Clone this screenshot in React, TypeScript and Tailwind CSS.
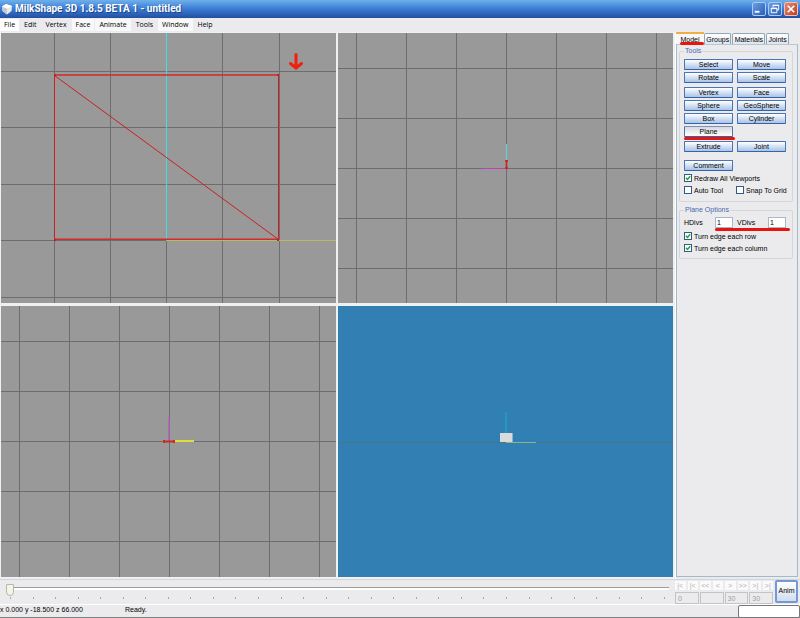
import type { ReactNode } from "react";

const menus = [
  { name: "File", style: "bg-white px-1" },
  { name: "Edit", style: "px-1" },
  { name: "Vertex", style: "px-1" },
  { name: "Face", style: "bg-[#f8f8f8] px-1" },
  { name: "Animate", style: "bg-[#f8f8f8] px-1" },
  { name: "Tools", style: "px-1" },
  { name: "Window", style: "bg-[#f8f8f8] px-1" },
  { name: "Help", style: "px-1" },
];

const tabs = ["Groups", "Materials", "Joints"];
const transport = ["|<", "|<", "<<", "<", ">", ">>", ">|", ">|"];
const ticks = Array.from({ length: 30 }, (_, i) => i);

function TitleBar() {
  return (
    <header className="flex h-[18px] shrink-0 items-center bg-linear-to-b from-[#6fb0ea] via-[#3a7bd5] to-[#234f9f] pr-0.5 pl-px">
      <svg className="size-3 shrink-0" viewBox="0 0 12 12" aria-hidden="true">
        <path d="M1 3.5 5 1l6 2-.5 5L6 11.500 1.500 8z" fill="#e9e9ea" />
        <path d="M1 3.500 6 5.500 6 11.500 1.500 8z" fill="#c4c8d0" />
        <path d="M1 3.500 5 1l6 2-5 2.500z" fill="#fff" />
      </svg>
      <h1 className="ml-0.5 grow whitespace-nowrap font-[Roboto,sans-serif] text-[10px] leading-[16px] font-bold text-white [text-shadow:1px_1px_0_#1b438c]">
        MilkShape 3D 1.8.5 BETA 1 - untitled
      </h1>
      <div className="flex gap-0.5">
        <button aria-label="Minimize" className="size-3.5 rounded-xs border border-[#a9caf2] bg-linear-to-br from-[#6c9fe4] to-[#2a5cb8]">
          <svg viewBox="0 0 13 13" className="size-full"><path d="M2 9.500h5" stroke="#fff" strokeWidth="2" /></svg>
        </button>
        <button aria-label="Restore" className="size-3.5 rounded-xs border border-[#a9caf2] bg-linear-to-br from-[#6c9fe4] to-[#2a5cb8]">
          <svg viewBox="0 0 13 13" className="size-full" fill="none" stroke="#fff">
            <path d="M4.500 4.500v-2h6v5h-2M4 2.500h7" /><path d="M2.500 5.500h6v5h-6zM2 6h7" />
          </svg>
        </button>
        <button aria-label="Close" className="size-3.5 rounded-xs border border-[#f0c0b4] bg-linear-to-br from-[#e08a76] to-[#bd3a22]">
          <svg viewBox="0 0 13 13" className="size-full"><path d="m3 3 7 7m0-7-7 7" stroke="#fff" strokeWidth="1.800" /></svg>
        </button>
      </div>
    </header>
  );
}

function MenuBar() {
  return (
    <nav className="flex h-[14px] shrink-0 items-center gap-px bg-[#ebebed] font-['Open_Sans',sans-serif] text-[7px] leading-[12px]">
      {menus.map((m) => (
        <button key={m.name} className={m.style}>{m.name}</button>
      ))}
    </nav>
  );
}

function Grid({ xs, ys, box }: { xs: number[]; ys: number[]; box: number[] }) {
  const [x, y, w, h] = box;
  return (
    <g stroke="#6d6d6d">
      {xs.map((v) => <path key={v} d={`M${v + 0.5} ${y}v${h}`} />)}
      {ys.map((v) => <path key={v} d={`M${x} ${v + 0.5}h${w}`} />)}
    </g>
  );
}

function Viewport({ box, label, color, children }: { box: number[]; label: string; color: string; children: ReactNode }) {
  return (
    <div className={`min-h-0 min-w-0 overflow-hidden ${color}`}>
      <svg className="block size-full" viewBox={box.join(" ")} preserveAspectRatio="xMidYMid slice" role="img" aria-label={label}>
        {children}
      </svg>
    </div>
  );
}

const front = [1, 33, 335, 270];
const side = [338, 33, 335, 270];
const top = [1, 306, 335, 271];
const scene = [338, 306, 335, 271];

function Viewports() {
  return (
    <main className="grid min-w-0 grow grid-cols-2 grid-rows-[270fr_271fr] gap-x-0.5 gap-y-[3px] bg-[#eef0f2] pt-px pr-0.5 pb-0.5 pl-px">
      <Viewport box={front} label="Front view" color="bg-[#999]">
        <Grid xs={[54, 110, 166, 222, 279]} ys={[71, 127, 184, 240, 297]} box={front} />
        <path d="M166.500 33v207" stroke="#3fe0e0" />
        <path d="M166 240.500h170" stroke="#b8b85c" />
        <path d="M54.500 75.500 278.500 239.500" stroke="#cc1f1f" />
        <path d="M54.500 75v165M278.500 75v165" stroke="#cc1f1f" />
        <path d="M54 75h225M54 239.300h225" stroke="#d42a2a" strokeWidth="1.600" />
        <path d="M54 74h2v2h-2zM277 74h2v2h-2zM54 239h2v2h-2zM277 239h2v2h-2z" fill="#c82020" />
        <path d="M296 54.500v12M290.500 63.500 296 68l5.500-4.500" fill="none" stroke="#f0200c" strokeWidth="3" strokeLinecap="round" />
      </Viewport>
      <Viewport box={side} label="Side view" color="bg-[#999]">
        <Grid xs={[356, 406, 456, 506, 556, 606, 656]} ys={[68, 118, 168, 218, 268]} box={side} />
        <path d="M506.500 144v17" stroke="#4fd8e0" />
        <path d="M482 168.500h24" stroke="#c040c0" />
        <path d="M506.500 160v9M505 161h3M505 168h3" stroke="#cc1f1f" strokeWidth="1.500" />
      </Viewport>
      <Viewport box={top} label="Top view" color="bg-[#999]">
        <Grid xs={[19, 69, 119, 169, 219, 269, 319]} ys={[341, 391, 441, 491, 541]} box={top} />
        <path d="M169 417v24" stroke="#b060b4" strokeWidth="1.500" />
        <path d="M174 441h20" stroke="#dede3a" strokeWidth="2" />
        <path d="M164 441.500h10" stroke="#d02828" strokeWidth="2" />
        <path d="M163 440h2v3h-2zM173 440h2v3h-2z" fill="#d02828" />
      </Viewport>
      <Viewport box={scene} label="3D view" color="bg-[#327fb3]">
        <path d="M338 442.500h335" stroke="#447889" />
        <path d="M506 412v21" stroke="#22a0c0" strokeWidth="1.500" />
        <path d="M506 442.500h30" stroke="#86ba84" />
        <path d="M500 433h12v9h-12z" fill="#d9dadc" />
        <path d="M512 433h1v9h-1z" fill="#8fb0c8" />
      </Viewport>
    </main>
  );
}

function Tool({ name, active }: { name: string; active?: boolean }) {
  const face = active ? "from-[#d5d8df] to-white border-t-[#7f92b4]" : "from-white to-[#a9c3e8]";
  return (
    <button className={`h-[11px] rounded-[1px] border border-[#4a74b4] border-b-[#3563a8] bg-linear-to-b text-center text-[7px] leading-[9px] ${face}`}>
      {name}
    </button>
  );
}

function Pair({ children }: { children: ReactNode }) {
  return <div className="grid grid-cols-2 gap-x-1 gap-y-0.5">{children}</div>;
}

function Check({ label, checked }: { label: string; checked?: boolean }) {
  return (
    <label className="flex h-3 items-center gap-0.5 whitespace-nowrap">
      <span className="grid size-2 shrink-0 place-items-center">
        <input type="checkbox" defaultChecked={checked} className="peer col-start-1 row-start-1 size-2 appearance-none border border-[#315b86] bg-white" />
        <svg viewBox="0 0 8 8" className="pointer-events-none invisible col-start-1 row-start-1 size-2 peer-checked:visible">
          <path d="m2 3.800 1.500 1.700L6.200 2.300" fill="none" stroke="#21a121" strokeWidth="1.400" />
        </svg>
      </span>
      {label}
    </label>
  );
}

function Underline({ width }: { width: string }) {
  return <span aria-hidden="true" className={`pointer-events-none absolute top-full left-0 h-[3px] rounded-full bg-[#e81410] ${width}`} />;
}

function SidePanel() {
  return (
    <aside className="flex w-[125px] shrink-0 flex-col border-l border-white bg-[#ebebed] pr-0.5 pb-0.5 text-[7px] leading-[9px]">
      <div role="tablist" className="flex h-3 shrink-0 items-end">
        <button role="tab" aria-selected="true" className="relative h-3 w-7 border-t-2 border-[#f0ae48] bg-[#f8f8f8] text-center">
          Model
          <span aria-hidden="true" className="pointer-events-none absolute -bottom-px left-1 h-[3px] w-6 rounded-full bg-[#e81410]" />
        </button>
        {tabs.map((t) => (
          <button role="tab" aria-selected="false" key={t} className="mr-px h-[11px] grow rounded-t-xs border border-b-0 border-[#91a7b4] bg-linear-to-b from-white to-[#dde5ef] text-center">
            {t}
          </button>
        ))}
        <span className="w-2" />
      </div>
      <div className="grow border border-[#a3b9cc] border-t-[#bac6d0] px-0.5 pt-0.5">
        <fieldset className="mr-0.5 rounded-xs border border-[#d4d6da] px-1 pb-[5px]">
          <legend className="h-2 px-px leading-[8px] text-[#4668b0]">Tools</legend>
          <div className="flex flex-col gap-1 pt-1 pr-0.5">
            <Pair>
              <Tool name="Select" /><Tool name="Move" />
              <Tool name="Rotate" /><Tool name="Scale" />
            </Pair>
            <Pair>
              <Tool name="Vertex" /><Tool name="Face" />
              <Tool name="Sphere" /><Tool name="GeoSphere" />
              <Tool name="Box" /><Tool name="Cylinder" />
              <div className="relative grid">
                <Tool name="Plane" active />
                <Underline width="w-[51px]" />
              </div>
            </Pair>
            <Pair><Tool name="Extrude" /><Tool name="Joint" /></Pair>
          </div>
          <div className="pt-2 pr-0.5 pb-px"><Pair><Tool name="Comment" /></Pair></div>
          <Check label="Redraw All Viewports" checked />
          <div className="grid grid-cols-2"><Check label="Auto Tool" /><Check label="Snap To Grid" /></div>
        </fieldset>
        <fieldset className="mt-1 mr-0.5 rounded-xs border border-[#d4d6da] px-1 pb-1">
          <legend className="h-2 px-px leading-[8px] text-[#4668b0]">Plane Options</legend>
          <div className="flex items-center pt-[3px] pb-0.5">
            <label htmlFor="hdivs" className="w-[31px]">HDivs</label>
            <div className="relative flex">
              <input id="hdivs" defaultValue="1" className="h-[11px] w-[18px] border border-[#a7b8c8] bg-white px-px" />
              <Underline width="w-[75px]" />
            </div>
            <label htmlFor="vdivs" className="ml-1 w-[31px]">VDivs</label>
            <input id="vdivs" defaultValue="1" className="h-[11px] w-[18px] border border-[#a7b8c8] bg-white px-px" />
          </div>
          <Check label="Turn edge each row" checked />
          <Check label="Turn edge each column" checked />
        </fieldset>
      </div>
    </aside>
  );
}

function Timeline() {
  return (
    <section className="flex h-[25px] shrink-0 border-t border-[#d4d4d8] text-[7px]">
      <div className="flex min-w-0 grow flex-col px-[6px] pt-0.5">
        <input
          type="range"
          aria-label="Frame"
          defaultValue={0}
          className="h-3 w-full appearance-none bg-transparent [&::-webkit-slider-runnable-track]:h-[3px] [&::-webkit-slider-runnable-track]:border-t [&::-webkit-slider-runnable-track]:border-[#9c9c94] [&::-webkit-slider-runnable-track]:bg-white [&::-webkit-slider-thumb]:-mt-1 [&::-webkit-slider-thumb]:h-3 [&::-webkit-slider-thumb]:w-2 [&::-webkit-slider-thumb]:appearance-none [&::-webkit-slider-thumb]:rounded-b-full [&::-webkit-slider-thumb]:border [&::-webkit-slider-thumb]:border-[#b4b8ac] [&::-webkit-slider-thumb]:bg-[#f4f4e8]"
        />
        <div className="flex justify-between px-1 pt-[3px]">
          {ticks.map((t) => <span key={t} className="h-0.5 w-px bg-[#a8a8a8]" />)}
        </div>
      </div>
      <div className="flex w-[98px] shrink-0 flex-col gap-0.5 pt-px">
        <div className="flex gap-0.5">
          {transport.map((s, i) => (
            <button key={i} disabled className="h-[9px] grow basis-0 bg-[#fafafa] text-center text-[7px] leading-[9px] text-[#b0b0b0]">{s}</button>
          ))}
        </div>
        <div className="flex gap-px text-[#a0a0a0]">
          {["0", "", "30", "30"].map((v, i) => (
            <input key={i} disabled aria-label={`Frame field ${i + 1}`} defaultValue={v} className="h-3 min-w-0 grow basis-0 border border-[#c4c4c6] bg-[#ebebed] px-0.5" />
          ))}
        </div>
      </div>
      <button className="mr-0.5 ml-0.5 h-[23px] w-[23px] shrink-0 rounded-xs border-2 border-[#7499d4] bg-linear-to-b from-white to-[#d0dcee] text-center text-[7px]">
        Anim
      </button>
    </section>
  );
}

export default function App() {
  return (
    <div className="flex h-screen flex-col overflow-hidden bg-[#ebebed] font-['Liberation_Sans',Arial,sans-serif] text-black">
      <TitleBar />
      <MenuBar />
      <div className="flex min-h-0 grow">
        <Viewports />
        <SidePanel />
      </div>
      <Timeline />
      <footer className="flex h-[14px] shrink-0 items-start border-t border-white border-b border-b-[#7c8680] text-[7px] leading-[9px]">
        <span className="w-[125px]">x 0.000 y -18.500 z 66.000</span>
        <span className="grow">Ready.</span>
        <span className="h-[13px] w-[62px] rounded-xs border border-[#77777b] bg-white" />
      </footer>
    </div>
  );
}
